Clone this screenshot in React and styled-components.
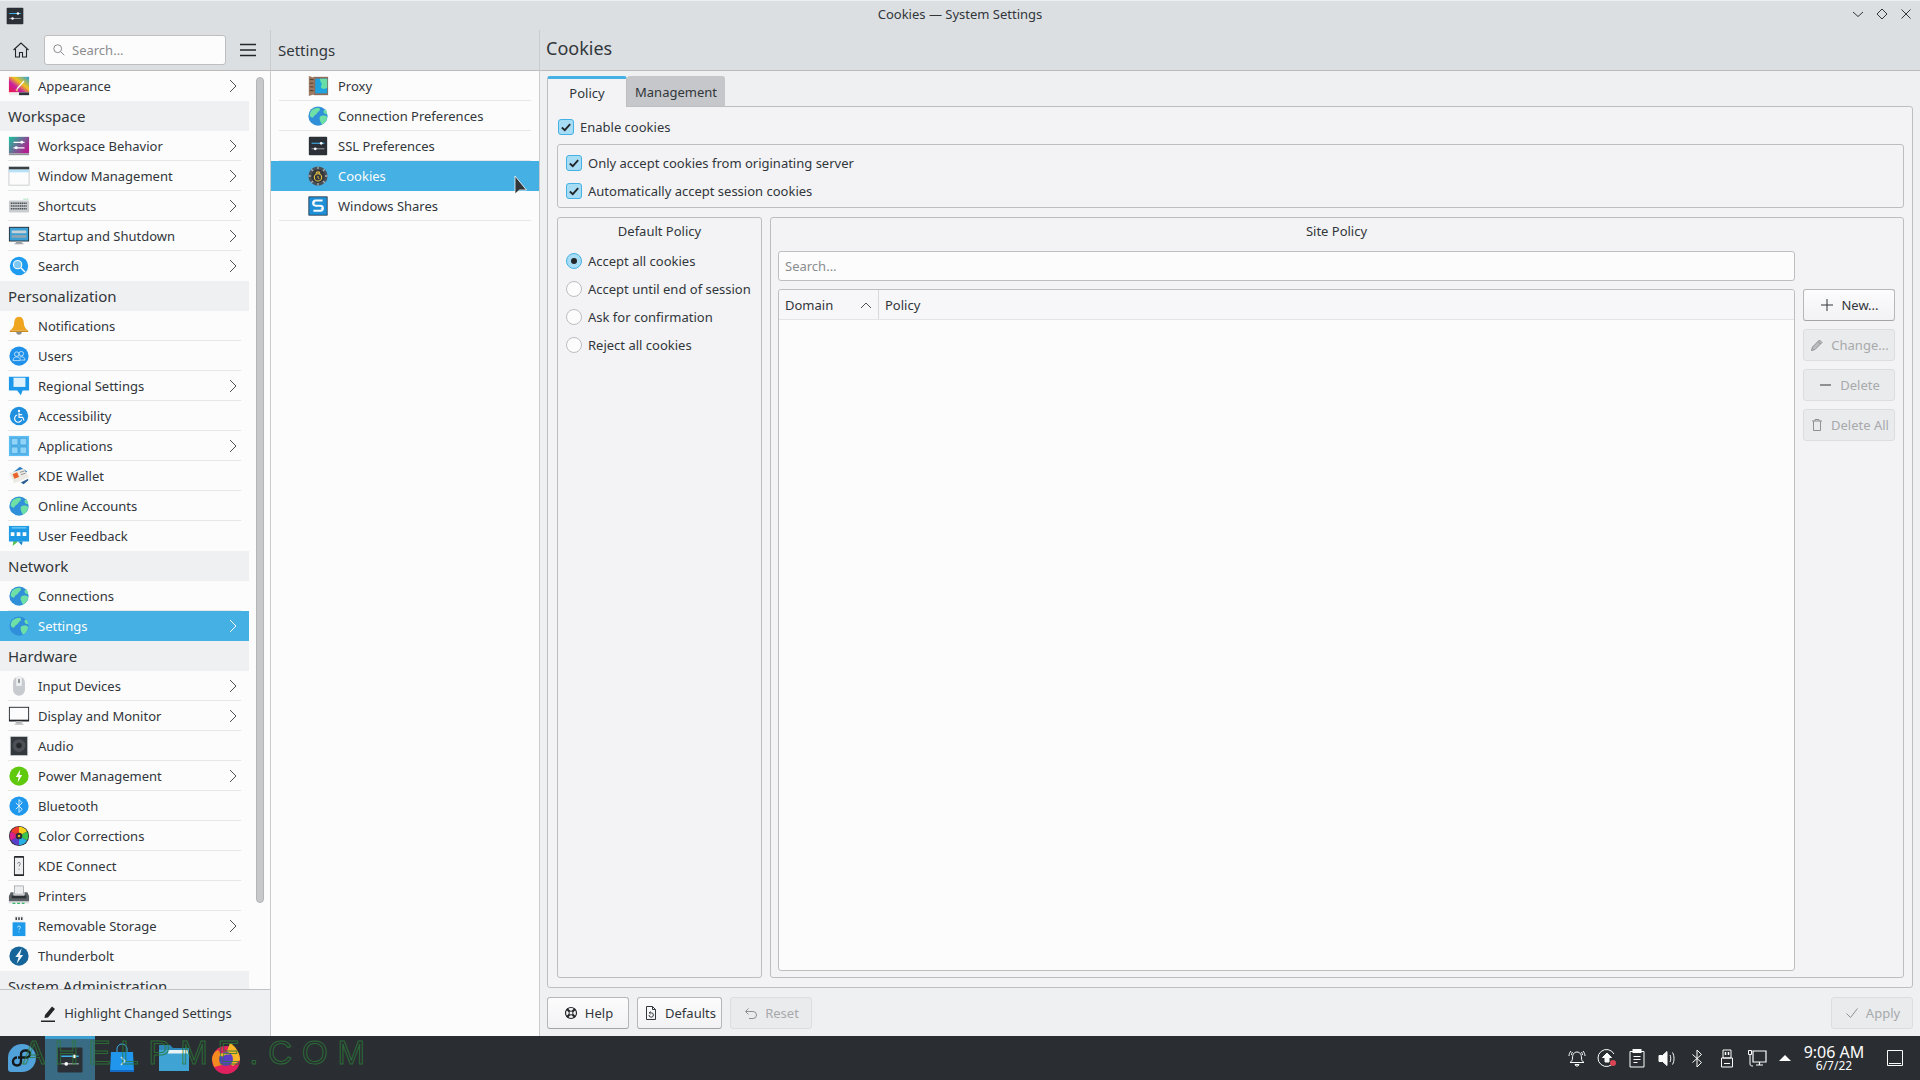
import React from "react";
import styled, { createGlobalStyle } from "styled-components";

const GlobalStyle = createGlobalStyle`
  html, body { margin: 0; padding: 0; height: 100%; }
  body {
    font-family: "Noto Sans", sans-serif;
    font-size: 13px;
    color: #232629;
    background: #eff0f1;
    overflow: hidden;
  }
  * { box-sizing: border-box; }
`;

const Screen = styled.div`
  position: relative;
  width: 1920px;
  height: 1080px;
  display: flex;
  flex-direction: column;
  overflow: hidden;
`;

const TitleBar = styled.div`
  height: 30px;
  flex: none;
  display: grid;
  grid-template-columns: 1fr auto 1fr;
  align-items: center;
  padding: 0 5px 3px;
  background: #dcdfe2;
  border-top: 1px solid #eceef0;
`;

const TitleText = styled.div`
  text-align: center;
  color: #31363b;
`;

const WindowButtons = styled.div`
  display: flex;
  justify-content: flex-end;
  gap: 8px;
  align-items: center;
  padding-right: 1px;
`;

const AppLogo = styled.div`
  display: flex;
  align-items: center;
  padding-top: 3px;
`;

const Body = styled.div`
  flex: 1;
  display: flex;
  min-height: 0;
`;

const Sidebar = styled.div`
  width: 271px;
  flex: none;
  display: flex;
  flex-direction: column;
  border-right: 1px solid #c9cbcd;
`;

const Middle = styled.div`
  width: 269px;
  flex: none;
  display: flex;
  flex-direction: column;
  background: #fcfcfd;
  border-right: 1px solid #c9cbcd;
`;

const Right = styled.div`
  flex: 1;
  display: flex;
  flex-direction: column;
  min-width: 0;
  background: #eff0f1;
`;

const HeaderBar = styled.div`
  height: 41px;
  flex: none;
  display: flex;
  align-items: center;
  background: #dcdfe2;
  border-bottom: 1px solid #b9bbbd;
  padding: ${({ $pad }) => $pad || "0"};
`;

const HeaderTitle = styled.div`
  font-size: ${({ $size }) => $size || "15px"};
  color: #31363b;
`;

const HomeButton = styled.div`
  width: 44px;
  flex: none;
  display: flex;
  justify-content: center;
  padding-right: 2px;
`;

const SearchField = styled.div`
  width: 182px;
  height: 30px;
  flex: none;
  display: flex;
  align-items: center;
  gap: 6px;
  padding: 0 7px;
  background: #fcfcfd;
  border: 1px solid #bcbebf;
  border-radius: 3px;
  color: #8b8d8f;
`;

const MenuButton = styled.div`
  width: 44px;
  flex: none;
  display: flex;
  justify-content: center;
`;

const SideScroll = styled.div`
  flex: 1;
  min-height: 0;
  display: flex;
  background: #fcfcfd;
`;

const SideList = styled.div`
  width: 249px;
  flex: none;
  overflow: hidden;
`;

const Track = styled.div`
  flex: 1;
  padding: 6px 6px 0 7px;
`;

const Thumb = styled.div`
  height: 826px;
  width: 8px;
  background: #c6c8ca;
  border: 1px solid #b3b5b7;
  border-radius: 4px;
`;

const SectionHead = styled.div`
  height: 30px;
  display: flex;
  align-items: center;
  padding-left: 8px;
  font-size: 15px;
  background: #eff0f1;
  color: #31363b;
`;

const Row = styled.div`
  position: relative;
  height: 30px;
  display: flex;
  align-items: center;
  background: ${({ $active }) => ($active ? "#45b0e3" : "transparent")};
  color: ${({ $active }) => ($active ? "#fcfcfc" : "#31363b")};
  padding-left: ${({ $indent }) => $indent}px;
  &::after {
    content: "";
    position: absolute;
    left: ${({ $lineLeft }) => $lineLeft}px;
    right: 8px;
    bottom: 0;
    height: 1px;
    background: ${({ $active, $noLine }) => ($active || $noLine ? "transparent" : "#e6e7e9")};
  }
`;

const RowIcon = styled.div`
  width: ${({ $box }) => $box}px;
  flex: none;
  display: flex;
  align-items: center;
`;

const RowLabel = styled.div`
  flex: 1;
`;

const Chevron = styled.svg`
  width: 8px;
  height: 14px;
  margin-right: 12px;
  fill: none;
  stroke: ${({ $active }) => ($active ? "#fcfcfc" : "#4d5257")};
  stroke-width: 1;
`;

const SideFooter = styled.div`
  height: 47px;
  flex: none;
  display: flex;
  align-items: center;
  justify-content: center;
  gap: 6px;
  padding-left: 2px;
  border-top: 1px solid #c0c2c4;
  background: #eff0f1;
  color: #31363b;
`;

const Content = styled.div`
  flex: 1;
  min-height: 0;
  display: flex;
  flex-direction: column;
  padding: 5px 7px 7px;
`;

const Tabs = styled.div`
  display: flex;
  height: 31px;
  flex: none;
  margin-bottom: -1px;
`;

const Tab = styled.div`
  height: 31px;
  width: ${({ $w }) => $w}px;
  display: flex;
  align-items: center;
  justify-content: center;
  border: 1px solid ${({ $active }) => ($active ? "#bcbebf" : "#c6c7ca")};
  border-bottom: ${({ $active }) => ($active ? "none" : "1px solid #bcbebf")};
  border-top: ${({ $active }) => ($active ? "3px solid #45b0e3" : "1px solid #c6c7ca")};
  border-radius: 3px 3px 0 0;
  background: ${({ $active }) => ($active ? "#f3f3f5" : "#c6c7ca")};
  position: relative;
  z-index: ${({ $active }) => ($active ? 1 : 0)};
  color: #31363b;
`;

const Panel = styled.div`
  flex: 1;
  min-height: 0;
  display: flex;
  flex-direction: column;
  padding: 12px 8px 9px 9px;
  background: #f3f3f5;
  border: 1px solid #bcbebf;
  border-radius: 0 3px 3px 3px;
`;

const CheckRow = styled.div`
  height: 16px;
  display: flex;
  align-items: center;
  gap: 6px;
  white-space: nowrap;
  margin: ${({ $margin }) => $margin || "0"};
  color: #31363b;
`;

const Box = styled.div`
  width: 16px;
  height: 16px;
  flex: none;
  display: flex;
  align-items: center;
  justify-content: center;
  background: #a7dcf5;
  border: 1px solid #45b0e3;
  border-radius: 3px;
`;

const Dot = styled.div`
  width: 16px;
  height: 16px;
  flex: none;
  display: flex;
  align-items: center;
  justify-content: center;
  border-radius: 50%;
  border: 1px solid ${({ $on }) => ($on ? "#45b0e3" : "#bcbebf")};
  background: ${({ $on }) => ($on ? "#a7dcf5" : "#fcfcfd")};
  &::after {
    content: "";
    display: ${({ $on }) => ($on ? "block" : "none")};
    width: 6px;
    height: 6px;
    border-radius: 50%;
    background: #232629;
  }
`;

const Group = styled.div`
  border: 1px solid #bcbebf;
  border-radius: 3px;
  background: #f3f3f5;
`;

const OptionsGroup = styled(Group)`
  height: 64px;
  flex: none;
  margin-top: 9px;
  padding: 10px 8px;
  display: flex;
  flex-direction: column;
  gap: 12px;
`;

const Columns = styled.div`
  flex: 1;
  min-height: 0;
  margin-top: 9px;
  display: flex;
  gap: 8px;
`;

const PolicyGroup = styled(Group)`
  width: 205px;
  flex: none;
  padding: 3px 8px;
  display: flex;
  flex-direction: column;
`;

const SiteGroup = styled(Group)`
  flex: 1;
  min-width: 0;
  padding: 3px 8px 6px 7px;
  display: flex;
  flex-direction: column;
`;

const GroupTitle = styled.div`
  height: 20px;
  text-align: center;
  line-height: 20px;
  color: #31363b;
`;

const RadioList = styled.div`
  margin-top: 12px;
  display: flex;
  flex-direction: column;
  gap: 12px;
`;

const SiteBody = styled.div`
  flex: 1;
  min-height: 0;
  display: grid;
  grid-template-columns: 1017px 1fr;
  grid-template-rows: 30px 1fr;
  column-gap: 8px;
  row-gap: 8px;
  margin-top: 10px;
`;

const FilterField = styled.div`
  grid-column: 1;
  height: 30px;
  display: flex;
  align-items: center;
  padding: 0 6px;
  background: #fcfcfd;
  border: 1px solid #bcbebf;
  border-radius: 3px;
  color: #8b8d8f;
`;

const Table = styled.div`
  grid-column: 1;
  grid-row: 2;
  background: #fcfcfd;
  border: 1px solid #bcbebf;
  border-radius: 3px;
`;

const TableHead = styled.div`
  height: 30px;
  display: flex;
  background: #f7f7f9;
  border-bottom: 1px solid #e3e4e6;
  border-radius: 3px 3px 0 0;
`;

const HeadCell = styled.div`
  width: ${({ $w }) => ($w ? `${$w}px` : "auto")};
  display: flex;
  align-items: center;
  justify-content: space-between;
  padding: 0 6px;
  border-right: ${({ $w }) => ($w ? "1px solid #d8d9db" : "none")};
  color: #31363b;
`;

const SideButtons = styled.div`
  grid-column: 2;
  grid-row: 2;
  display: flex;
  flex-direction: column;
  gap: 8px;
`;

const Button = styled.div`
  height: 32px;
  width: ${({ $w }) => ($w ? `${$w}px` : "auto")};
  display: flex;
  align-items: center;
  justify-content: center;
  gap: 6px;
  border-radius: 3px;
  border: 1px solid ${({ $off }) => ($off ? "#dcdddf" : "#b5b7b9")};
  border-bottom-color: ${({ $off }) => ($off ? "#dcdddf" : "#a2a4a6")};
  background: ${({ $off }) =>
    $off ? "#eaebed" : "linear-gradient(#fcfcfd, #f2f2f4)"};
  color: ${({ $off }) => ($off ? "#a7a9ab" : "#31363b")};
`;

const ActionBar = styled.div`
  height: 32px;
  flex: none;
  margin-top: 9px;
  display: flex;
  gap: 8px;
`;

const ApplySlot = styled.div`
  margin-left: auto;
`;

const Taskbar = styled.div`
  position: relative;
  height: 44px;
  flex: none;
  display: flex;
  align-items: center;
  background: #2a2e32;
  color: #fcfcfc;
`;

const StartSlot = styled.div`
  width: 44px;
  height: 44px;
  display: flex;
  align-items: center;
  justify-content: center;
`;

const TaskItem = styled.div`
  width: 52px;
  height: 44px;
  display: flex;
  align-items: center;
  justify-content: center;
  ${({ $active }) =>
    $active &&
    `background: #3a6b84;
     border-top: 3px solid #3d9fd0;
     margin: 0 1px;
     width: 50px;`}
`;

const Watermark = styled.div`
  position: absolute;
  left: 23px;
  top: 0;
  line-height: 33px;
  font-family: "Liberation Sans", sans-serif;
  font-size: 33px;
  letter-spacing: 9.8px;
  color: transparent;
  -webkit-text-stroke: 1px #2b7a38;
  opacity: 0.8;
  pointer-events: none;
  white-space: nowrap;
`;

const Tray = styled.div`
  margin-left: auto;
  display: flex;
  align-items: center;
  height: 100%;
`;

const TraySlot = styled.div`
  width: ${({ $w }) => $w || 30}px;
  display: flex;
  align-items: center;
  justify-content: center;
`;

const Clock = styled.div`
  width: 72px;
  text-align: center;
  line-height: 1;
`;

const ClockTime = styled.div`
  font-size: 16px;
  height: 16px;
`;

const ClockDate = styled.div`
  font-size: 12px;
`;

const Pointer = styled.svg`
  position: absolute;
  left: 514px;
  top: 175px;
  width: 14px;
  height: 24px;
`;

const ico = (children, size = 22) => (
  <svg width={size} height={size} viewBox="0 0 24 24">
    {children}
  </svg>
);

const sliders = (
  <>
    <rect x="2" y="2" width="20" height="20" rx="1" fill="#2b3036" />
    <path d="M5 9h14" stroke="#3daee9" strokeWidth="1.2" />
    <path d="M5 15h14" stroke="#8d9397" strokeWidth="1.2" />
    <circle cx="15.5" cy="9" r="1.5" fill="#fcfcfc" />
    <circle cx="9" cy="15" r="1.5" fill="#fcfcfc" />
  </>
);

const globe = (
  <>
    <circle cx="12" cy="12" r="10.5" fill="#2f8fd8" />
    <path d="M6 5c3-2 7-3 8-1 1 2-2 3-3 5s-3 2-4 4-4 0-4-2 1-4 3-6z" fill="#6fe0a5" />
    <path d="M14 13c2-2 6-2 8 0-0 3-3 8-6 8-1-2-3-6-2-8z" fill="#6fe0a5" />
    <path d="M20 5c1 1 2 3 2 5-2 0-4-1-4-3 0-1 1-2 2-2z" fill="#6fe0a5" />
  </>
);

const ring = (
  <>
    <path d="M12 12V2a10 10 0 0 1 8.7 5z" fill="#f7d21e" />
    <path d="M12 12l8.7-5a10 10 0 0 1 0 10z" fill="#3ec34a" />
    <path d="M12 12l8.7 5a10 10 0 0 1-8.7 5z" fill="#27aee3" />
    <path d="M12 12v10a10 10 0 0 1-8.7-5z" fill="#5a3fc9" />
    <path d="M12 12l-8.7 5a10 10 0 0 1 0-10z" fill="#d8218c" />
    <path d="M12 12L3.3 7A10 10 0 0 1 12 2z" fill="#ef3a2e" />
  </>
);

const glyphs = {
  appearance: (
    <>
      <defs>
        <linearGradient id="appGrad" x1="0" y1="1" x2="1" y2="0">
          <stop offset="0" stopColor="#f0163f" />
          <stop offset="0.35" stopColor="#c821a0" />
          <stop offset="0.6" stopColor="#f2c31b" />
          <stop offset="1" stopColor="#1f9fe0" />
        </linearGradient>
      </defs>
      <rect x="1" y="2" width="22" height="17" fill="url(#appGrad)" />
      <rect x="1" y="19" width="11" height="3" fill="#f0eee8" />
      <rect x="12" y="19" width="11" height="3" fill="#31363b" />
      <path d="M17 6l-7 8-1 2 2-1 7-8z" fill="#fcfcfc" />
      <path d="M8 16l3-1-1 3z" fill="#f5dc70" />
    </>
  ),
  workspace: (
    <>
      <defs>
        <linearGradient id="wsGrad" x1="0" y1="0" x2="1" y2="0.6">
          <stop offset="0" stopColor="#15c49b" />
          <stop offset="1" stopColor="#b21f8f" />
        </linearGradient>
      </defs>
      <rect x="1" y="2" width="22" height="18" fill="url(#wsGrad)" />
      <rect x="1" y="20" width="22" height="2" fill="#8e9296" />
      <path d="M6 8h12M6 14h12" stroke="#fcfcfc" strokeWidth="1.2" />
      <circle cx="15" cy="8" r="1.6" fill="#fcfcfc" />
      <circle cx="9" cy="14" r="1.6" fill="#fcfcfc" />
    </>
  ),
  windowMgmt: (
    <>
      <rect x="1" y="2" width="22" height="20" fill="#fcfcfc" stroke="#c8cacc" />
      <rect x="1" y="2" width="22" height="3" fill="#3b4045" />
      <rect x="1" y="5" width="22" height="3" fill="#b7e2f7" />
    </>
  ),
  keyboard: (
    <>
      <rect x="1" y="6" width="22" height="13" rx="1" fill="#c9cdd0" />
      <path d="M3 9h18M3 12h18M3 15h18" stroke="#4a4f54" strokeWidth="1.6" strokeDasharray="1.4 .6" />
      <path d="M17 4.5h5" stroke="#58c77e" strokeWidth="1" strokeDasharray="1 1" />
    </>
  ),
  startup: (
    <>
      <rect x="1" y="2" width="22" height="16" fill="#2b3036" />
      <rect x="2" y="3" width="20" height="14" fill="#3aa0d6" />
      <rect x="4" y="6" width="16" height="3" fill="#c7d2d8" />
      <rect x="4" y="11" width="16" height="3" fill="#8fa5b2" />
      <path d="M9 18h6v2H9zM7 20.500h10" stroke="#9aa0a4" fill="#9aa0a4" />
    </>
  ),
  search: (
    <>
      <circle cx="12" cy="12" r="10" fill="#1f9cf0" />
      <circle cx="10.500" cy="10.500" r="4.500" fill="#7cc8f5" stroke="#fcfcfc" strokeWidth="1.2" />
      <path d="M14 14l4.500 4.500" stroke="#fcfcfc" strokeWidth="1.6" />
    </>
  ),
  bell: (
    <>
      <path d="M12 2c3.500 0 5 3 5.300 7 .3 4 1.700 6 4.700 8H2c3-2 4.400-4 4.700-8C7 5 8.500 2 12 2z" fill="#f0a51e" />
      <path d="M2 17h20v1.500H2z" fill="#c98512" />
      <path d="M9 18.500h6a3 3 0 0 1-6 0z" fill="#8a8d90" />
    </>
  ),
  users: (
    <>
      <circle cx="12" cy="12" r="10.500" fill="#2091ea" />
      <circle cx="9.500" cy="10" r="2.500" fill="none" stroke="#cfe9fb" strokeWidth="0.9" />
      <circle cx="14.500" cy="9.500" r="2.500" fill="none" stroke="#cfe9fb" strokeWidth="0.9" />
      <path d="M5.500 17c0-3 2-4 4-4s4 1 4 4zM13 13c3-.7 5.500.5 5.500 3.500h-4" fill="none" stroke="#cfe9fb" strokeWidth="0.9" />
    </>
  ),
  regional: (
    <>
      <path d="M1 2h22v15h-7l-2 5-4-5H1z" fill="#1c98ea" />
      <rect x="6" y="3" width="13" height="10" fill="#dff1fb" />
    </>
  ),
  access: (
    <>
      <circle cx="12" cy="12" r="10" fill="#1f8fe0" />
      <circle cx="12" cy="6.500" r="1.300" fill="#fcfcfc" />
      <path d="M12 8.500v5h4l1.500 3.500M12 10.500h3.500M10 11a4 4 0 1 0 5 5" fill="none" stroke="#fcfcfc" strokeWidth="1.200" />
    </>
  ),
  apps: (
    <>
      <rect x="1" y="1" width="22" height="22" fill="#5dbcf0" />
      <path d="M3.500 3.500h7.500v7.500H3.500zM13 3.500h7.500v7.500H13zM3.500 13h7.500v7.500H3.500zM13 13h7.500v7.500H13z" fill="#8fd3f7" stroke="#2f94d6" strokeWidth="0.8" />
    </>
  ),
  wallet: (
    <>
      <path d="M3 10L13 2l8 5-10 9z" fill="#2d7fc4" />
      <path d="M1 9l16-5 6 9-16 7z" fill="#eceae3" />
      <path d="M5 10l5-2 2 5-5 2z" fill="#e8622a" />
      <path d="M13 8l5-1.500M14 10.500l5-1.500" stroke="#8b8d8f" />
      <path d="M14 19l8-4v2l-5 4z" fill="#2b5f92" />
    </>
  ),
  globe,
  feedback: (
    <>
      <path d="M6 17l-1 6 6-5z" fill="#54c54a" />
      <rect x="1" y="1" width="22" height="17" fill="#1d99e5" />
      <path d="M4 3h16" stroke="#5ec0f2" strokeWidth="2" />
      <path d="M3 10h18" stroke="#fcfcfc" strokeWidth="4" strokeDasharray="4 2.500" />
      <path d="M11 18l4 4 1-4z" fill="#1684cb" />
    </>
  ),
  mouse: (
    <>
      <rect x="5.500" y="1.500" width="13" height="21" rx="6.500" fill="#c7cbcf" />
      <path d="M9 1.900h6v10H9z" fill="#eef0f1" />
      <rect x="11" y="4" width="2" height="5" rx="1" fill="#8e9296" />
    </>
  ),
  display: (
    <>
      <rect x="1" y="2" width="22" height="16" fill="#23272b" />
      <rect x="2" y="3" width="20" height="13" fill="#fcfcfc" />
      <path d="M9 18h6v2H9zM7 21h10" stroke="#b3b5b7" fill="#b3b5b7" />
    </>
  ),
  audio: (
    <>
      <rect x="2" y="1" width="20" height="22" fill="#dcdedf" />
      <rect x="3" y="2" width="18" height="20" fill="#33383c" />
      <circle cx="12" cy="11.500" r="7" fill="#4a5055" />
      <circle cx="12" cy="11.500" r="3" fill="#24282b" />
    </>
  ),
  power: (
    <>
      <circle cx="12" cy="12" r="10.500" fill="#5fc90d" />
      <path d="M13.500 5L8.500 13h3l-1 6 5-8h-3z" fill="#fcfcfc" />
    </>
  ),
  bluetooth: (
    <>
      <circle cx="12" cy="12" r="10.500" fill="#1f98ee" />
      <path d="M8.500 8.500l7 7-3.500 3.500V5l3.500 3.500-7 7" fill="none" stroke="#e3f3fd" strokeWidth="1" />
    </>
  ),
  color: (
    <>
      <circle cx="12" cy="12" r="11" fill="#2b2e31" />
      {ring}
      <circle cx="12" cy="12" r="3.600" fill="#2b2e31" />
      <circle cx="12" cy="12" r="1.400" fill="#e5b21c" />
    </>
  ),
  phone: (
    <>
      <rect x="6.500" y="1" width="11" height="22" rx="1" fill="#23272b" />
      <rect x="7.500" y="3" width="9" height="18" fill="#eceef0" />
      <path d="M10.500 9.500c0-2 3-2 3 0 0 1.500-1.500 1.500-1.500 3M12 15v1" fill="none" stroke="#7b8084" />
    </>
  ),
  printer: (
    <>
      <rect x="7" y="1" width="10" height="9" fill="#eceef0" stroke="#8e9296" strokeWidth="0.7" />
      <path d="M1 18v-6l2-4h3v4h12V8h3l2 4v6z" fill="#5b6065" />
      <rect x="4" y="11.500" width="16" height="3" fill="#2c3135" />
      <rect x="1" y="18" width="22" height="2" fill="#d9dbdd" />
      <path d="M5 20h14" stroke="#33b86a" strokeWidth="1.200" strokeDasharray="3 2" />
    </>
  ),
  usb: (
    <>
      <rect x="7" y="1" width="10" height="8" fill="#eef0f1" />
      <path d="M9 2.500v3M12 2.500v3M15 2.500v3" stroke="#3b3f43" strokeWidth="1.600" />
      <rect x="5" y="8" width="14" height="15" fill="#1d9aea" />
      <path d="M10.500 13.500c0-2 3-2 3 0 0 1.300-1.500 1.300-1.500 2.500M12 18v1" fill="none" stroke="#d8effc" />
    </>
  ),
  thunderbolt: (
    <>
      <circle cx="12" cy="12" r="10.500" fill="#16659a" />
      <path d="M15 3.500L8 13h3.500L9.500 20.500 16.500 11H13z" fill="#eef7fc" />
    </>
  ),
  proxy: (
    <>
      <rect x="7" y="2" width="16" height="20" fill="#8a6d5c" />
      <rect x="9" y="4" width="13" height="16" fill="#1ea3e0" />
      <path d="M14 4h8v10c-3 2-6 1-7-1 1-3 2-3 0-5z" fill="#69dfa8" />
      <path d="M2 1l6 2v18l-6 2z" fill="#9c7960" />
      <path d="M3 5h4M3 9h4M3 13h4M3 17h4" stroke="#4c3a30" strokeWidth="1" />
    </>
  ),
  ssl: sliders,
  cookies: (
    <>
      <circle cx="12" cy="12" r="10.500" fill="#4a4f54" />
      <circle cx="12" cy="12" r="7.500" fill="#34383c" />
      <path d="M12 1.500v3M12 19.500v3M1.500 12h3M19.500 12h3M4.600 4.600l2 2M17.400 17.400l2 2M19.400 4.600l-2 2M4.600 19.400l2-2" stroke="#a9adb0" strokeWidth="1.400" />
      <circle cx="12" cy="13.500" r="4" fill="none" stroke="#e8c440" strokeWidth="1.200" />
      <path d="M10 9.500a2 2 0 0 1 4 0" fill="none" stroke="#e8c440" strokeWidth="1.200" />
      <path d="M12 12v2l1.500 1" fill="none" stroke="#e8c440" />
    </>
  ),
  shares: (
    <>
      <rect x="2" y="2" width="20" height="20" fill="#1f8fd8" stroke="#1b2a36" strokeWidth="0.8" />
      <path d="M17 6H9.500a2.800 2.800 0 0 0 0 5.600h5a2.800 2.800 0 0 1 0 5.600H7" fill="none" stroke="#fcfcfc" strokeWidth="2.200" />
      <path d="M6 8.500h3M15 15h3" stroke="#fcfcfc" strokeWidth="1" />
    </>
  ),
};

const Glyph = ({ name, size }) => ico(glyphs[name], size);

const line = (children, color = "#31363b", size = 16) => (
  <svg width={size} height={size} viewBox="0 0 16 16" fill="none" stroke={color} strokeWidth="1">
    {children}
  </svg>
);

const ChevronRight = ({ active }) => (
  <Chevron viewBox="0 0 8 14" $active={active}>
    <path d="M1 1l6 6-6 6" />
  </Chevron>
);

const CheckMark = () => (
  <svg width="12" height="12" viewBox="0 0 13 13" fill="none" stroke="#232629" strokeWidth="2">
    <path d="M2 7l3.200 3L11 3.500" />
  </svg>
);

const CheckOption = ({ label, margin }) => (
  <CheckRow $margin={margin}>
    <Box>
      <CheckMark />
    </Box>
    {label}
  </CheckRow>
);

const RadioOption = ({ label, on }) => (
  <CheckRow>
    <Dot $on={on} />
    {label}
  </CheckRow>
);

const sidebar = [
  { icon: "appearance", label: "Appearance", more: true, last: true },
  { head: "Workspace" },
  { icon: "workspace", label: "Workspace Behavior", more: true },
  { icon: "windowMgmt", label: "Window Management", more: true },
  { icon: "keyboard", label: "Shortcuts", more: true },
  { icon: "startup", label: "Startup and Shutdown", more: true },
  { icon: "search", label: "Search", more: true, last: true },
  { head: "Personalization" },
  { icon: "bell", label: "Notifications" },
  { icon: "users", label: "Users" },
  { icon: "regional", label: "Regional Settings", more: true },
  { icon: "access", label: "Accessibility" },
  { icon: "apps", label: "Applications", more: true },
  { icon: "wallet", label: "KDE Wallet" },
  { icon: "globe", label: "Online Accounts" },
  { icon: "feedback", label: "User Feedback", last: true },
  { head: "Network" },
  { icon: "globe", label: "Connections" },
  { icon: "globe", label: "Settings", more: true, active: true },
  { head: "Hardware" },
  { icon: "mouse", label: "Input Devices", more: true },
  { icon: "display", label: "Display and Monitor", more: true },
  { icon: "audio", label: "Audio" },
  { icon: "power", label: "Power Management", more: true },
  { icon: "bluetooth", label: "Bluetooth" },
  { icon: "color", label: "Color Corrections" },
  { icon: "phone", label: "KDE Connect" },
  { icon: "printer", label: "Printers" },
  { icon: "usb", label: "Removable Storage", more: true },
  { icon: "thunderbolt", label: "Thunderbolt", last: true },
  { head: "System Administration" },
];

const modules = [
  { icon: "proxy", label: "Proxy" },
  { icon: "globe", label: "Connection Preferences" },
  { icon: "ssl", label: "SSL Preferences" },
  { icon: "cookies", label: "Cookies", active: true },
  { icon: "shares", label: "Windows Shares" },
];

const policies = [
  { label: "Accept all cookies", on: true },
  { label: "Accept until end of session" },
  { label: "Ask for confirmation" },
  { label: "Reject all cookies" },
];

const grey = "#8e9093";

const siteButtons = [
  { label: "New...", icon: line(<path d="M8 2v12M2 8h12" />) },
  {
    label: "Change...",
    off: true,
    icon: line(<path d="M2.500 13.500l1-3.500 7-7 2.500 2.500-7 7zM9 4.500L11.500 7" fill={grey} fillOpacity="0.5" />, grey),
  },
  { label: "Delete", off: true, icon: line(<path d="M2 8h11" strokeWidth="2" />, grey) },
  {
    label: "Delete All",
    off: true,
    icon: line(<path d="M3 4h10M6 4V2.500h4V4M4.500 4v9.500h7V4" />, grey),
  },
];

const trayIcons = [
  <path key="bell" d="M11 5c3 0 4.500 2.500 4.500 6 0 2.500 1 3.500 2.500 4.500H4c1.500-1 2.500-2 2.500-4.500C6.500 7.500 8 5 11 5zM9 17.500h4l-1 1.500h-2zM3 9c0-2 .8-3.500 2-5M19 9c0-2-.8-3.500-2-5M5.500 8c0-1 .3-2 1-3M16.500 8c0-1-.3-2-1-3" />,
  <g key="up">
    <path d="M18 7a8.500 8.500 0 1 0 0 8" />
    <path d="M11 6l4.500 4.500H13V15H9v-4.500H6.500z" fill="#fcfcfc" />
    <circle cx="17" cy="16" r="3" fill="#da4453" stroke="none" />
  </g>,
  <g key="clip">
    <path d="M4 4.500h14V20H4zM7.500 9.500h7M7.500 12.500h7M7.500 15.500h4" />
    <rect x="7" y="2.500" width="8" height="3" fill="#fcfcfc" />
  </g>,
  <g key="vol">
    <path d="M3 8.500h3.500L11 4.500v14l-4.500-4H3z" fill="#fcfcfc" />
    <path d="M14 8c1 2 1 5 0 7M16.500 5.500c2 3.500 2 8.500 0 12" />
  </g>,
  <path key="bt" d="M6.500 7.500l9 8L11 20V3l4.500 4.500-9 8" />,
  <g key="usb">
    <path d="M7 3h8v8H7zM5.500 11h11v9h-11zM8 16.500h6" />
    <path d="M9.500 5v3M12.500 5v3" strokeWidth="1.500" />
  </g>,
  <g key="net">
    <path d="M7 4h13v11H7zM10 18h7M13.500 15v3" strokeWidth="1.200" />
    <path d="M2.500 3.500h3v4h-3zM4 7.500V17c0 2 1.500 2 3 2" />
  </g>,
];

const App = () => (
  <Screen>
    <GlobalStyle />
    <TitleBar>
      <AppLogo>
        <Glyph name="ssl" size={20} />
      </AppLogo>
      <TitleText>Cookies — System Settings</TitleText>
      <WindowButtons>
        {line(<path d="M3 6l5 4.500L13 6" />)}
        {line(<path d="M8 3l5 5-5 5-5-5z" />)}
        {line(<path d="M3.500 3.500l9 9M12.500 3.500l-9 9" />)}
      </WindowButtons>
    </TitleBar>

    <Body>
      <Sidebar>
        <HeaderBar>
          <HomeButton>
            <svg width="18" height="18" viewBox="0 0 18 18" fill="none" stroke="#232629" strokeWidth="1.100">
              <path d="M1.500 9L9 2l7.500 7M3.500 8v8h4v-4.500h3V16h4V8" />
            </svg>
          </HomeButton>
          <SearchField>
            {line(<path d="M6.500 2a4.500 4.500 0 1 1 0 9 4.500 4.500 0 0 1 0-9zM10 10l4 4" />, "#7b7e81", 14)}
            Search...
          </SearchField>
          <MenuButton>
            <svg width="16" height="14" viewBox="0 0 16 14" stroke="#232629" strokeWidth="1.700">
              <path d="M0 1.500h16M0 7h16M0 12.500h16" />
            </svg>
          </MenuButton>
        </HeaderBar>
        <SideScroll>
          <SideList>
            {sidebar.map((item) =>
              item.head ? (
                <SectionHead key={item.head}>{item.head}</SectionHead>
              ) : (
                <Row
                  key={item.label}
                  $indent={8}
                  $lineLeft={8}
                  $active={item.active}
                  $noLine={item.last}
                >
                  <RowIcon $box={30}>
                    <Glyph name={item.icon} />
                  </RowIcon>
                  <RowLabel>{item.label}</RowLabel>
                  {item.more && <ChevronRight active={item.active} />}
                </Row>
              )
            )}
          </SideList>
          <Track>
            <Thumb />
          </Track>
        </SideScroll>
        <SideFooter>
          <svg width="18" height="18" viewBox="0 0 18 18" fill="#232629">
            <path d="M5 11l7-8.500 3 2.500-7 8.500-3.500.5zM1 16.500h14V18H1z" />
          </svg>
          Highlight Changed Settings
        </SideFooter>
      </Sidebar>

      <Middle>
        <HeaderBar $pad="0 0 0 7px">
          <HeaderTitle>Settings</HeaderTitle>
        </HeaderBar>
        {modules.map((item) => (
          <Row key={item.label} $indent={36} $lineLeft={8} $active={item.active}>
            <RowIcon $box={31}>
              <Glyph name={item.icon} />
            </RowIcon>
            <RowLabel>{item.label}</RowLabel>
          </Row>
        ))}
      </Middle>

      <Right>
        <HeaderBar $pad="0 0 4px 6px">
          <HeaderTitle $size="18px">Cookies</HeaderTitle>
        </HeaderBar>
        <Content>
          <Tabs>
            <Tab $active $w={80}>Policy</Tab>
            <Tab $w={98}>Management</Tab>
          </Tabs>
          <Panel>
            <CheckOption label="Enable cookies" margin="0 0 0 1px" />
            <OptionsGroup>
              <CheckOption label="Only accept cookies from originating server" />
              <CheckOption label="Automatically accept session cookies" />
            </OptionsGroup>
            <Columns>
              <PolicyGroup>
                <GroupTitle>Default Policy</GroupTitle>
                <RadioList>
                  {policies.map((p) => (
                    <RadioOption key={p.label} label={p.label} on={p.on} />
                  ))}
                </RadioList>
              </PolicyGroup>
              <SiteGroup>
                <GroupTitle>Site Policy</GroupTitle>
                <SiteBody>
                  <FilterField>Search...</FilterField>
                  <Table>
                    <TableHead>
                      <HeadCell $w={100}>
                        Domain
                        <svg width="12" height="8" viewBox="0 0 12 8" fill="none" stroke="#4d5257">
                          <path d="M1 7l5-5 5 5" />
                        </svg>
                      </HeadCell>
                      <HeadCell>Policy</HeadCell>
                    </TableHead>
                  </Table>
                  <SideButtons>
                    {siteButtons.map((b) => (
                      <Button key={b.label} $off={b.off}>
                        {b.icon}
                        {b.label}
                      </Button>
                    ))}
                  </SideButtons>
                </SiteBody>
              </SiteGroup>
            </Columns>
          </Panel>
          <ActionBar>
            <Button $w={82}>
              {line(
                <>
                  <circle cx="8" cy="8" r="5.500" strokeWidth="1.200" />
                  <circle cx="8" cy="8" r="2" />
                  <path d="M4 4l2.500 2.500M12 4L9.500 6.500M4 12l2.500-2.500M12 12L9.500 9.500" strokeWidth="2.200" />
                </>,
                "#232629"
              )}
              Help
            </Button>
            <Button $w={85}>
              {line(<path d="M3.500 1.500h6l3 3v10h-9zM9.500 1.500v3h3M6 10a2.200 2.200 0 1 0 2.200-2.200H6.500M7.500 6.500l-1.300 1.300 1.300 1.300" />)}
              Defaults
            </Button>
            <Button $off $w={82}>
              {line(<path d="M3 6.500h7a3.500 3.500 0 0 1 0 7H6M5.500 3.500l-3 3 3 3" />, grey)}
              Reset
            </Button>
            <ApplySlot>
              <Button $off $w={82}>
                {line(<path d="M2.500 8.500l4 4 7-9" />, grey)}
                Apply
              </Button>
            </ApplySlot>
          </ActionBar>
        </Content>
      </Right>
    </Body>

    <Taskbar>
      <StartSlot>
        <svg width="32" height="32" viewBox="0 0 32 32">
          <path d="M16 2a14 14 0 0 1 14 14 14 14 0 0 1-14 14H5a3 3 0 0 1-3-3V16A14 14 0 0 1 16 2z" fill="#51a2da" />
          <path d="M19 8.500h3M12 15.500h8M19 8.500c-3 0-4 2-4 4V19c0 3-1.500 4.500-4 4.500s-4-1.500-4-4 2-4 4-4M16 15.500h4c2.500 0 4-2 4-3.500s-1.500-3.500-4-3.500" fill="none" stroke="#15181a" strokeWidth="2.400" />
        </svg>
      </StartSlot>
      <TaskItem $active>
        <svg width="30" height="30" viewBox="0 0 24 24">{sliders}</svg>
      </TaskItem>
      <TaskItem>
        <svg width="28" height="30" viewBox="0 0 28 30">
          <path d="M9 9V6a5 5 0 0 1 10 0v3" fill="none" stroke="#3daee9" strokeWidth="1" />
          <path d="M3 9h22l1 20H2z" fill="#2196ed" />
          <path d="M13 14l4 4-4 4" fill="none" stroke="#b8e2fb" strokeWidth="1.600" />
          <path d="M2 27h24v2H2z" fill="#1369c4" />
        </svg>
      </TaskItem>
      <TaskItem>
        <svg width="32" height="28" viewBox="0 0 32 28">
          <path d="M1 1h11l3 3h16v23H1z" fill="#2d87b8" />
          <rect x="1" y="6" width="30" height="21" fill="#3fa4d4" />
          <rect x="10" y="6" width="20" height="3.500" fill="#e9f3f7" />
        </svg>
      </TaskItem>
      <TaskItem>
        <svg width="32" height="32" viewBox="0 0 32 32">
          <circle cx="16" cy="18" r="14" fill="#e0215f" />
          <path d="M20 1c5 3 10 9 10 17l-7 6-9-7z" fill="#f7b52a" />
          <path d="M2 18c0-5 3-9 6-10l3 4 9 1-8 10-8 2z" fill="#f38a1f" />
          <circle cx="16" cy="17" r="7" fill="#5b3fc5" />
          <path d="M9 13c3-3 9-3 11 0-3-1-6 0-6 1-2 1-4 0-5-1z" fill="#f7b52a" />
        </svg>
      </TaskItem>
      <Watermark>AHELPME.COM</Watermark>
      <Tray>
        {trayIcons.map((icon) => (
          <TraySlot key={icon.key}>
            <svg width="22" height="22" viewBox="0 0 22 22" fill="none" stroke="#fcfcfc" strokeWidth="1">
              {icon}
            </svg>
          </TraySlot>
        ))}
        <TraySlot $w={26}>
          <svg width="12" height="6" viewBox="0 0 12 6" fill="#fcfcfc">
            <path d="M0 6l6-6 6 6z" />
          </svg>
        </TraySlot>
        <Clock>
          <ClockTime>9:06 AM</ClockTime>
          <ClockDate>6/7/22</ClockDate>
        </Clock>
        <TraySlot $w={50}>
          <svg width="16" height="16" viewBox="0 0 16 16" fill="none" stroke="#fcfcfc">
            <path d="M.5.5h15v15H.5zM2 13.500h12" />
          </svg>
        </TraySlot>
      </Tray>
    </Taskbar>

    <Pointer viewBox="0 0 14 24">
      <path d="M1 1v18l4.500-4h7z" fill="#31363b" stroke="#fcfcfc" strokeWidth="0.800" />
    </Pointer>
  </Screen>
);

export default App;
